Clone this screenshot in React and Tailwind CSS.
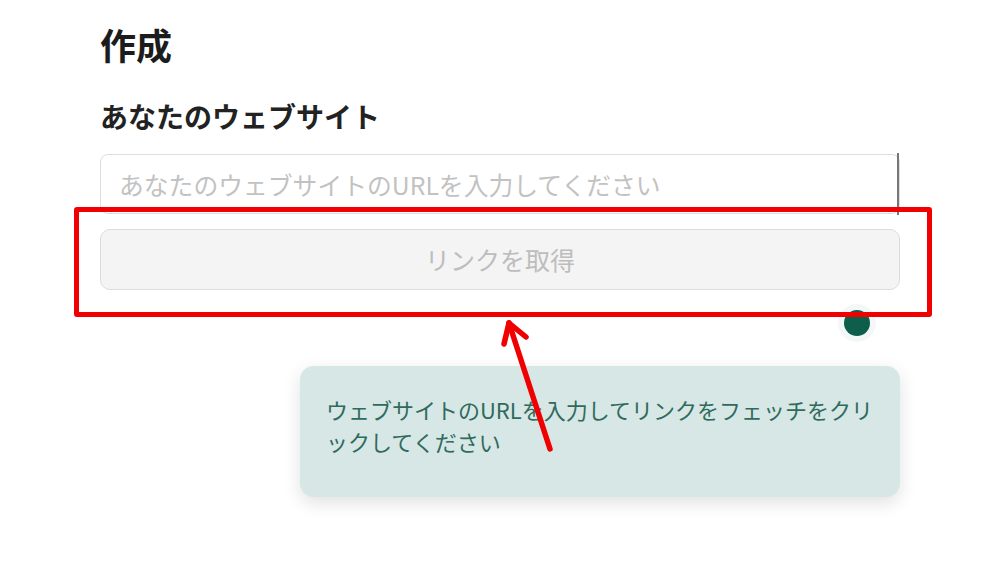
import React from "react";

export default function App() {
  return (
    <div
      className="relative w-[1006px] h-[571px] bg-white overflow-hidden"
      style={{ fontFamily: '"Noto Sans CJK JP", "Noto Sans", sans-serif' }}
    >
      <div className="ml-[100px] w-[800px] pt-[20px] flex flex-col">
        <h1 className="text-[36px] leading-[48px] font-bold text-[#1c1c1c]">作成</h1>
        <h2 className="mt-[30px] text-[28px] leading-[36px] font-bold text-[#222]">
          あなたのウェブサイト
        </h2>
        <div className="relative mt-[20px]">
          <input
            className="w-full h-[60px] rounded-[8px] border border-[#dedede] bg-white px-[18px] text-[24.8px] text-[#333] placeholder:text-[#c2c2c2] outline-none"
            placeholder="あなたのウェブサイトのURLを入力してください"
            style={{ fontFamily: '"Noto Sans CJK JP", sans-serif' }}
          />
        </div>
        <button className="mt-[15px] w-full h-[61px] rounded-[10px] border border-[#dcdcdc] bg-[#f4f4f4] text-[25px] text-[#bdbdbd]">
          リンクを取得
        </button>
        <div className="flex justify-end pr-[30px] mt-[20px]">
          <div className="w-[26px] h-[26px] rounded-full bg-[#0d5e4b] shadow-[0_0_0_6px_rgba(240,244,243,0.7)]" />
        </div>
        <div className="ml-[200px] mt-[30px] w-[600px] min-h-[131px] rounded-[14px] bg-[#d7e7e5] shadow-[0_6px_18px_rgba(0,0,0,0.12)] pl-[26px] pr-[24px] pt-[27px] pb-[40px]">
          <p className="text-[22px] leading-[32px] text-[#2f6b5d]">
            ウェブサイトのURLを入力してリンクをフェッチをクリックしてください
          </p>
        </div>
      </div>

      {/* thin dark edge line at input's right */}
      <div className="absolute left-[897px] top-[153px] w-[2px] h-[62px] bg-[#777]" />

      {/* red highlight rectangle */}
      <div className="absolute left-[74px] top-[207px] w-[858px] h-[110px] border-[5px] border-[#f00000] rounded-[3px]" />

      {/* red arrow */}
      <svg className="absolute left-0 top-0" width="1006" height="571" viewBox="0 0 1006 571">
        <g stroke="#f00000" strokeWidth="5.5" strokeLinecap="round" fill="none">
          <line x1="550" y1="449" x2="509" y2="323" />
          <line x1="509" y1="323" x2="504" y2="344" />
          <line x1="509" y1="323" x2="526" y2="337" />
        </g>
      </svg>
    </div>
  );
}
